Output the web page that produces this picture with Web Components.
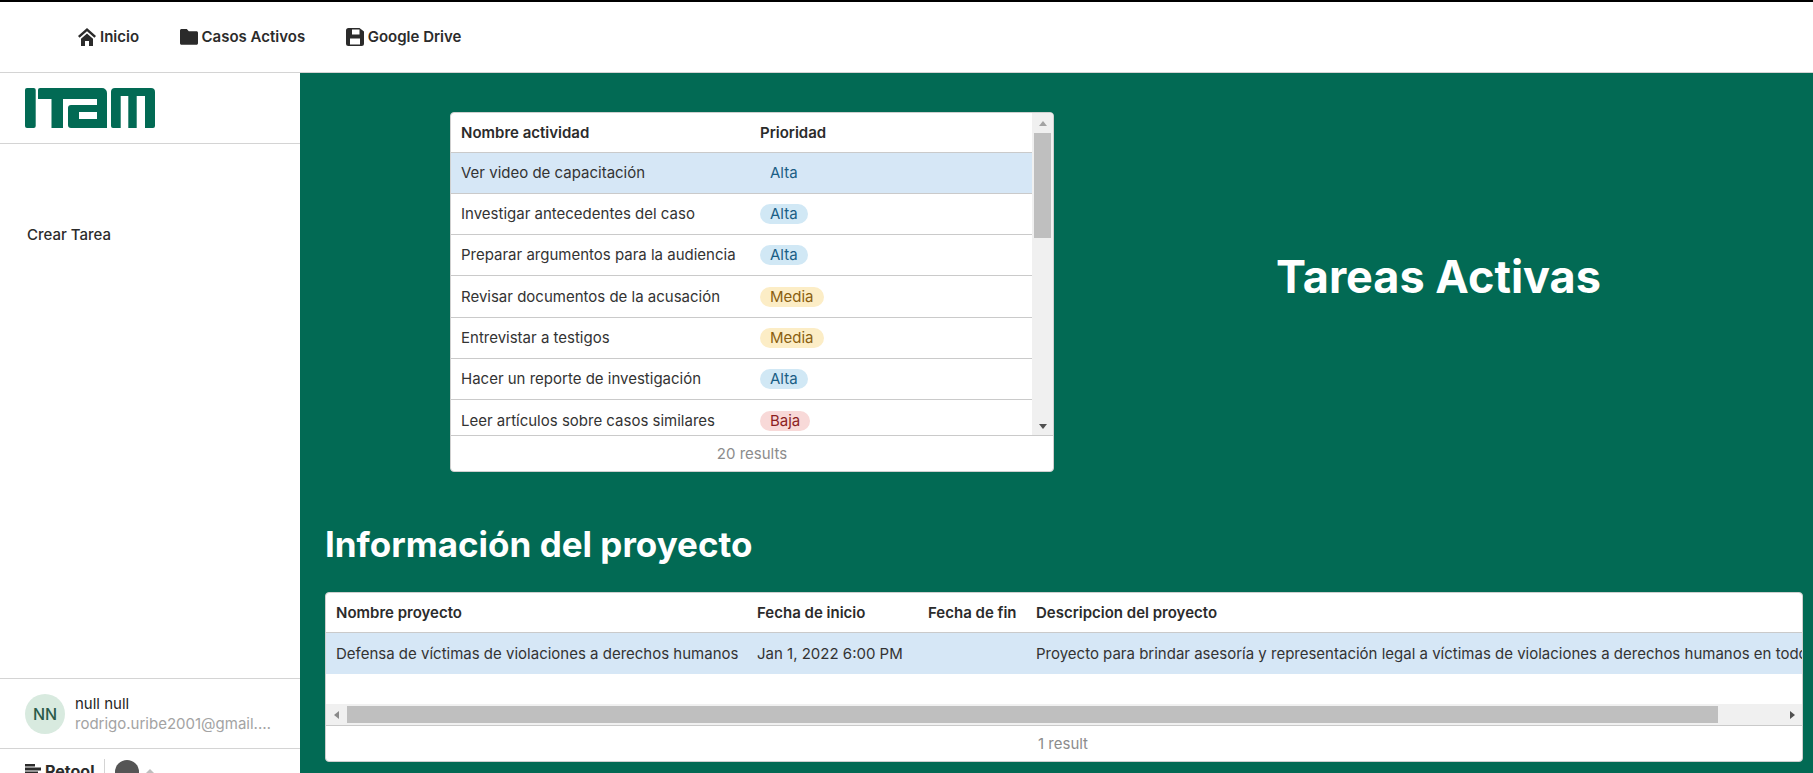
<!DOCTYPE html>
<html><head><meta charset="utf-8"><style>
html,body{margin:0;height:100%;overflow:hidden;background:#fff;font-family:Inter,"Liberation Sans",sans-serif}
</style></head><body>
<app-shell>
  <nav-bar slot="nav">
    <nav-item label="Inicio" icon="home"></nav-item>
    <nav-item label="Casos Activos" icon="folder"></nav-item>
    <nav-item label="Google Drive" icon="save"></nav-item>
  </nav-bar>
  <side-bar slot="side"></side-bar>
  <main-area slot="main"></main-area>
</app-shell>
<script>
const icons={
home:'<svg width="18" height="18" viewBox="0 0 18 18"><path fill="#2b2b2b" d="M9 0 0 8l1.600 1.800L9 3.300l7.400 6.500L18 8z"/><path fill="#2b2b2b" d="M9 5.500 3 10.800V18h4v-5h4v5h4v-7.200z"/></svg>',
folder:'<svg width="18" height="18" viewBox="0 0 18 18"><path fill="#2b2b2b" d="M1.500 1h5.300l2 2.300h7.700c.8 0 1.500.7 1.500 1.500v10.400c0 .8-.7 1.500-1.500 1.500h-15C.7 16.700 0 16 0 15.200V2.500C0 1.700.7 1 1.500 1z"/></svg>',
save:'<svg width="18" height="18" viewBox="0 0 18 18"><path fill="#2b2b2b" fill-rule="evenodd" d="M2.500 0h11L18 3.500v12a2.500 2.500 0 0 1-2.500 2.500h-13A2.500 2.500 0 0 1 0 15.500v-13A2.500 2.500 0 0 1 2.500 0zM6 1.500v5h7.500v-5zM4 10.500v6h10v-6z"/></svg>'};
function def(name,css,html,init){customElements.define(name,class extends HTMLElement{
 connectedCallback(){if(this.shadowRoot)return;const r=this.attachShadow({mode:'open'});
 r.innerHTML='<style>'+css+'</style>'+(typeof html==='function'?html(this):html);if(init)init(this,r);}});}

def('app-shell',`:host{display:grid;grid-template-columns:300px 1fr;grid-template-rows:71px 1fr;height:773px;width:1813px;border-top:2px solid #000;box-sizing:border-box;overflow:hidden}
.n{grid-column:1/3;display:block}
.s{display:block;min-height:0}.m{display:block;min-width:0;min-height:0;background:#026a54}`,
`<slot name="nav" class="n"></slot><slot name="side" class="s"></slot><slot name="main" class="m"></slot>`);

def('nav-bar',`:host{display:flex;align-items:center;height:71px;padding-left:78px;gap:40.5px;box-sizing:border-box;border-bottom:1px solid #d4d4d4}`,`<slot></slot>`);
def('nav-item',`:host{display:inline-flex;align-items:center;gap:4px;font:600 15px/20px Inter,sans-serif;color:#2b2b2b}svg{display:block}`,
 h=>icons[h.getAttribute('icon')]+`<span>${h.getAttribute('label')}</span>`);

def('itam-logo',`:host{display:block;width:130px;height:40px}svg{display:block}`,
`<svg width="130" height="40" viewBox="0 0 130 40"><g fill="#026a54">
<rect x="0" y="0" width="10.700" height="40" rx="2"/>
<path fill-rule="evenodd" d="M15 0H77a5 5 0 0 1 5 5V40H46a3 3 0 0 1-3-3V20a3 3 0 0 1 3-3H72V11H38V40H26.500V11H13V2a2 2 0 0 1 2-2ZM54 24H72V31H54Z"/>
<path d="M90 0H126a4 4 0 0 1 4 4V38a2 2 0 0 1-2 2H120V8H111.700V40H103.300V8H95.700V40H88a2 2 0 0 1-2-2V4a4 4 0 0 1 4-4Z"/></g></svg>`);

def('side-bar',`:host{display:flex;flex-direction:column;height:700px;box-sizing:border-box;background:#fff;font-family:Inter,sans-serif}
.logo{height:71px;flex:none;padding:15px 0 0 25px;box-sizing:border-box;border-bottom:1px solid #d4d4d4}
.body{flex:1;padding:81px 0 0 27px;font:500 15px/20px Inter,sans-serif;color:#2b2b2b}
.user{height:71px;flex:none;box-sizing:border-box;border-top:1px solid #d4d4d4;border-bottom:1px solid #d4d4d4;display:flex;align-items:center;padding-left:25px;gap:10px}
.av{width:40px;height:40px;border-radius:50%;background:#d8eadf;color:#2a5c4a;display:flex;align-items:center;justify-content:center;font:500 16px Inter,sans-serif}
.t{font:400 15px/20px Inter,sans-serif;color:#1f1f1f}.e{font:400 15px/20px Inter,sans-serif;color:#a3a3a3;width:198px;white-space:nowrap;overflow:hidden;text-overflow:ellipsis}
.foot{height:24px;flex:none;display:flex;padding:10px 0 0 25px;box-sizing:border-box;overflow:hidden}
.re{display:flex;align-items:flex-start;gap:4px;font:700 16px/20px Inter,sans-serif;color:#2b2b2b;height:30px;box-sizing:border-box;border-right:1px solid #d4d4d4;padding:2px 9px 0 0;width:80px;flex:none}
.re svg{margin-top:3px;flex:none}
.dot{width:24px;height:24px;border-radius:50%;background:#555;margin:1px 0 0 10px;flex:none}
.car{width:0;height:0;border:6px solid transparent;border-bottom:6px solid #bdbdbd;border-top:0;margin:10px 0 0 5px}
svg{display:block}`,
`<div class="logo"><itam-logo></itam-logo></div><div class="body">Crear Tarea</div>
<div class="user"><div class="av">NN</div><div><div class="t">null null</div><div class="e">rodrigo.uribe2001@gmail.com</div></div></div>
<div class="foot"><div class="re"><svg width="16" height="14" viewBox="0 0 16 14"><path fill="#2b2b2b" d="M0 0h10v2.400H0zM0 3.500h16v3H0zM0 7.500h13v3H0z"/></svg>Retool</div><div class="dot"></div><div class="car"></div></div>`);

def('pill-tag',`:host{display:inline-block;height:20px;padding:0 10px;border-radius:10px;font:400 15px/20px Inter,sans-serif}
:host([k=Alta]){background:#d1e8f5;color:#1a5e85}:host([k=Media]){background:#fcedc6;color:#8a5f10}:host([k=Baja]){background:#f8d9d8;color:#8c1f1f}
:host([sel]){background:transparent}`,`<slot></slot>`);

const rows=[['Ver video de capacitación','Alta'],['Investigar antecedentes del caso','Alta'],['Preparar argumentos para la audiencia','Alta'],['Revisar documentos de la acusación','Media'],['Entrevistar a testigos','Media'],['Hacer un reporte de investigación','Alta'],['Leer artículos sobre casos similares','Baja']];

const tblCss=`:host{display:block;background:#fff;border-radius:4px;border:1px solid #cfcfcf;box-sizing:border-box;overflow:hidden;font:400 15px/20px Inter,sans-serif;color:#333}
.row{display:flex;align-items:center;box-sizing:border-box;border-bottom:1px solid #cacaca;white-space:nowrap}
.row>div{padding-left:10px;box-sizing:border-box;flex:none}
.h{height:40px;font-weight:600;color:#2b2b2b}
.sel{background:#d6e7f6}
.foot{text-align:center;color:#8c8c8c;height:35px;line-height:35px}
.tr{width:0;height:0;border:4px solid transparent}
`;
def('task-table',tblCss+`:host{width:604px;height:360px}
.wrap{display:flex;height:322px;border-bottom:1px solid #cacaca;box-sizing:content-box}
.list{width:581px;height:322px;overflow:hidden}
.c1{width:299px}.c2{width:280px}
.r{height:41.16px}.r.last{border-bottom:0}
.sb{width:21px;background:#f0f0f0;display:flex;flex-direction:column;align-items:center}
.th{width:17px;height:105px;background:#bfbfbf;margin-top:7px}
.up{border-bottom:5px solid #a3a3a3;border-top:0;margin-top:8px}
.dn{border-top:5px solid #505050;border-bottom:0;margin-top:auto;margin-bottom:6px}`,
`<div class="wrap"><div class="list"><div class="row h"><div class="c1">Nombre actividad</div><div class="c2">Prioridad</div></div>
${rows.map((r,i)=>`<div class="row r ${i==0?'sel':''} ${i==6?'last':''}"><div class="c1">${r[0]}</div><div class="c2"><pill-tag k="${r[1]}" ${i==0?'sel':''}>${r[1]}</pill-tag></div></div>`).join('')}</div>
<div class="sb"><div class="tr up"></div><div class="th"></div><div class="tr dn"></div></div></div><div class="foot">20 results</div>`);

def('project-table',tblCss+`:host{height:170px}
.x{overflow:hidden;height:111px}.inner{width:1800px}
.c1{width:421px}.c2{width:171px}.c3{width:108px}.c4{width:1000px}
.r{height:41px;border-bottom:0}
.bar{height:21px;background:#f0f0f0;display:flex;align-items:center;border-bottom:1px solid #cacaca;box-sizing:content-box}
.l{border-right:5px solid #8a8a8a;border-left:0;margin-left:8px}
.th{height:17px;background:#bfbfbf;margin-left:8px;width:1371px}
.rr{border-left:5px solid #505050;border-right:0;margin-left:auto;margin-right:7px}
.foot{text-align:left;padding-left:712px}`,
`<div class="x"><div class="inner"><div class="row h"><div class="c1">Nombre proyecto</div><div class="c2">Fecha de inicio</div><div class="c3">Fecha de fin</div><div class="c4">Descripcion del proyecto</div></div>
<div class="row r sel"><div class="c1">Defensa de víctimas de violaciones a derechos humanos</div><div class="c2">Jan 1, 2022 6:00 PM</div><div class="c3"></div><div class="c4">Proyecto para brindar asesoría y representación legal a víctimas de violaciones a derechos humanos en todo</div></div></div></div>
<div class="bar"><div class="tr l"></div><div class="th"></div><div class="tr rr"></div></div><div class="foot">1 result</div>`);

def('main-area',`:host{display:block;height:700px;box-sizing:border-box;padding:39px 10px 0 25px;overflow:hidden;color:#fff;font-family:Inter,sans-serif}
.top{display:grid;grid-template-columns:125px 604px 1fr;height:360px}
h1{margin:0;font:700 45px/52px Inter,sans-serif;text-align:center;padding:139px 0 0 20px;box-sizing:border-box}
h2{margin:0;font:700 35px/40px Inter,sans-serif;padding-top:52px;height:120px;box-sizing:border-box}`,
`<div class="top"><div></div><task-table></task-table><h1>Tareas Activas</h1></div><h2>Información del proyecto</h2><project-table></project-table>`);
</script>
</body></html>
